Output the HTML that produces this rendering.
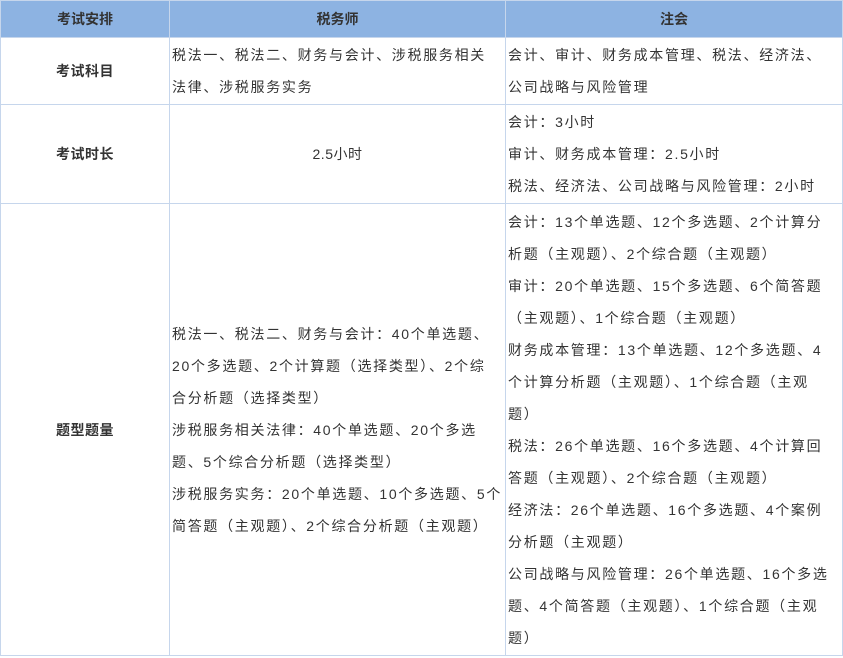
<!DOCTYPE html>
<html><head><meta charset="utf-8"><style>
body{margin:0;background:#fff;font-family:"Liberation Sans","Noto Sans CJK SC",sans-serif;font-size:14px;color:#333;}
table{position:absolute;left:0;top:0;border-collapse:collapse;table-layout:fixed;width:842px;}
td{border:1px solid #c6d6ec;padding:0 2px;line-height:32px;vertical-align:middle;white-space:nowrap;letter-spacing:1.7px;font-feature-settings:"chws" 0,"halt" 0;font-kerning:none;}
th{background:#8db3e2;border:1px solid #c6d6ec;height:36px;padding:0;font-weight:bold;font-size:14px;color:#333;}
.c{text-align:center;font-weight:bold;letter-spacing:0.5px;}
.m{text-align:center;letter-spacing:0.5px;}
</style></head><body>
<table>
<colgroup><col style="width:169px"><col style="width:336px"><col style="width:337px"></colgroup>
<tr><th>考试安排</th><th>税务师</th><th>注会</th></tr>
<tr style="height:67px"><td class="c">考试科目</td><td>税法一、税法二、财务与会计、涉税服务相关<br>法律、涉税服务实务</td><td>会计、审计、财务成本管理、税法、经济法、<br>公司战略与风险管理</td></tr>
<tr style="height:99px"><td class="c">考试时长</td><td class="m">2.5小时</td><td>会计：3小时<br>审计、财务成本管理：2.5小时<br>税法、经济法、公司战略与风险管理：2小时</td></tr>
<tr style="height:452px"><td class="c">题型题量</td><td>税法一、税法二、财务与会计：40个单选题、<br>20个多选题、2个计算题（选择类型）、2个综<br>合分析题（选择类型）<br>涉税服务相关法律：40个单选题、20个多选<br>题、5个综合分析题（选择类型）<br>涉税服务实务：20个单选题、10个多选题、5个<br>简答题（主观题）、2个综合分析题（主观题）</td><td>会计：13个单选题、12个多选题、2个计算分<br>析题（主观题）、2个综合题（主观题）<br>审计：20个单选题、15个多选题、6个简答题<br>（主观题）、1个综合题（主观题）<br>财务成本管理：13个单选题、12个多选题、4<br>个计算分析题（主观题）、1个综合题（主观<br>题）<br>税法：26个单选题、16个多选题、4个计算回<br>答题（主观题）、2个综合题（主观题）<br>经济法：26个单选题、16个多选题、4个案例<br>分析题（主观题）<br>公司战略与风险管理：26个单选题、16个多选<br>题、4个简答题（主观题）、1个综合题（主观<br>题）</td></tr>
</table>
</body></html>
